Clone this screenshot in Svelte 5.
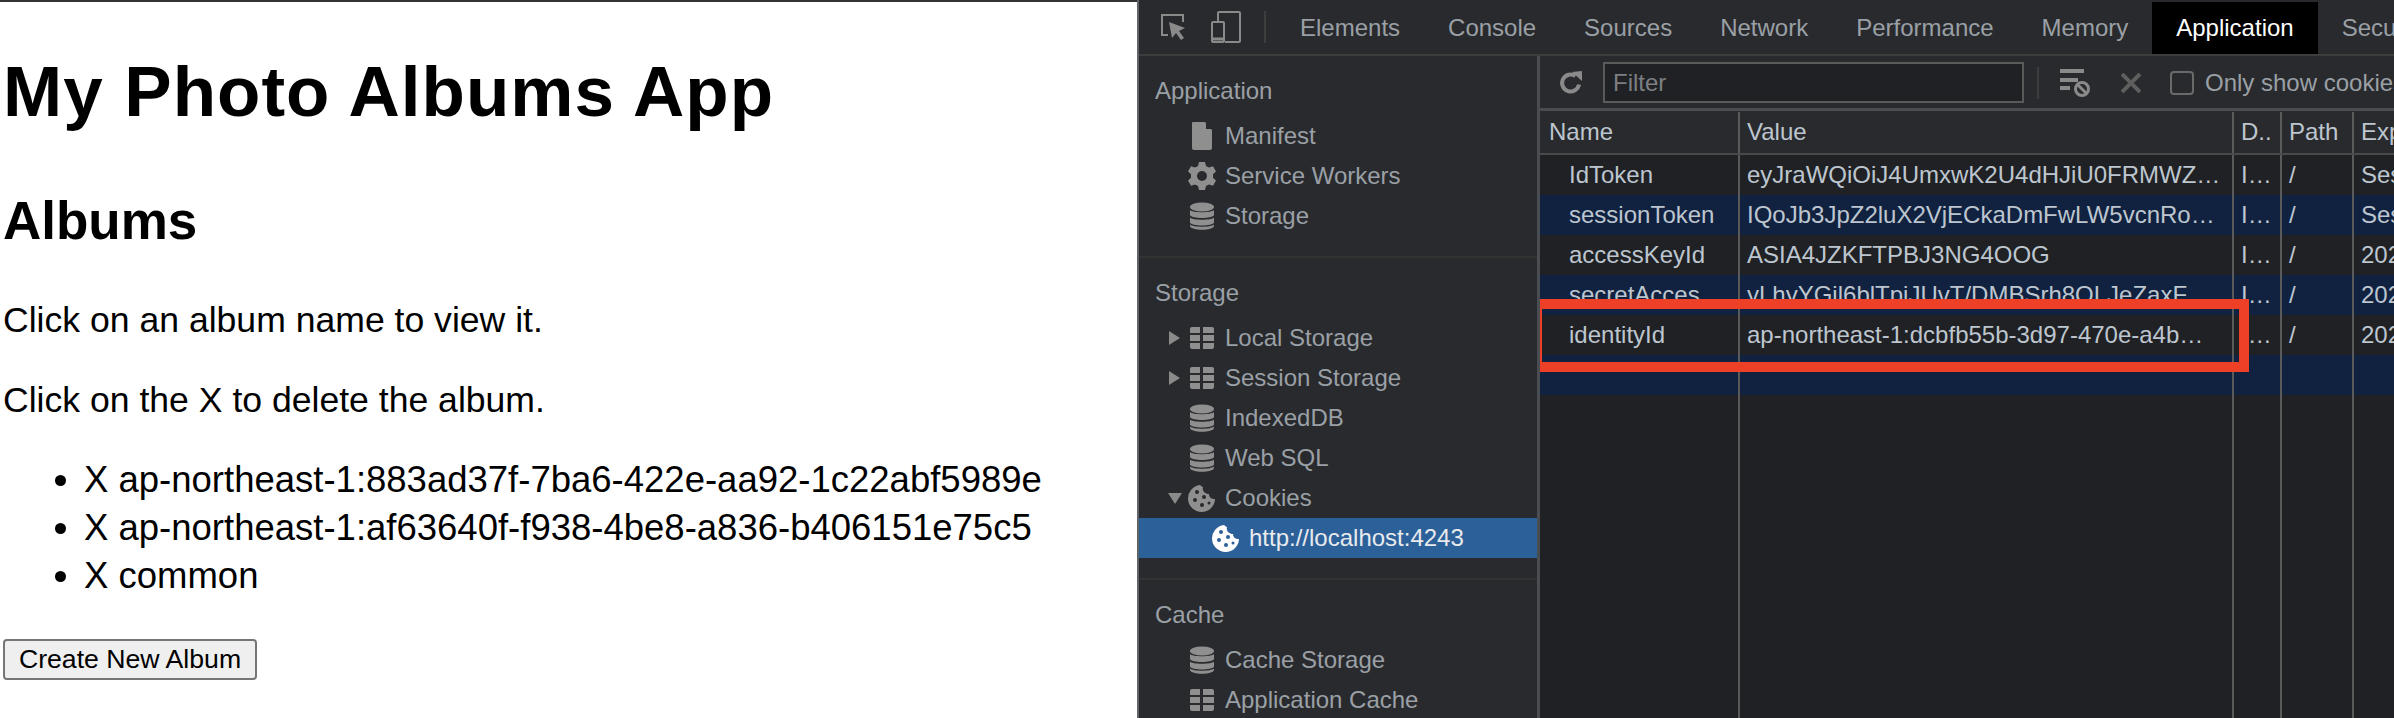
<script>
  const tabs = ["Elements", "Console", "Sources", "Network", "Performance", "Memory", "Application", "Security"]

  const groups = [
    {
      title: "Application",
      items: [
        { label: "Manifest", icon: "doc" },
        { label: "Service Workers", icon: "gear" },
        { label: "Storage", icon: "db" },
      ],
    },
    {
      title: "Storage",
      items: [
        { label: "Local Storage", icon: "grid", arrow: "right" },
        { label: "Session Storage", icon: "grid", arrow: "right" },
        { label: "IndexedDB", icon: "db" },
        { label: "Web SQL", icon: "db" },
        { label: "Cookies", icon: "cookie", arrow: "down" },
        { label: "http://localhost:4243", icon: "cookie", selected: true },
      ],
    },
    {
      title: "Cache",
      items: [
        { label: "Cache Storage", icon: "db" },
        { label: "Application Cache", icon: "grid" },
      ],
    },
  ]

  const rows = [
    ["IdToken", "eyJraWQiOiJ4UmxwK2U4dHJiU0FRMWZ…", "I…", "/", "Session"],
    ["sessionToken", "IQoJb3JpZ2luX2VjECkaDmFwLW5vcnRo…", "I…", "/", "Session"],
    ["accessKeyId", "ASIA4JZKFTPBJ3NG4OOG", "I…", "/", "2021"],
    ["secretAcces", "yLhyYGil6blTpjJUvT/DMBSrh8QLJeZaxF", "I…", "/", "2021"],
    ["identityId", "ap-northeast-1:dcbfb55b-3d97-470e-a4b…", "I…", "/", "2021"],
    ["", "", "", "", ""],
  ]
</script>

{#snippet icon(name)}
  {#if name === "doc"}
    <svg class="icon" viewBox="0 0 28 28"><path d="M5 0h12l7 8v18a2 2 0 0 1-2 2H6a2 2 0 0 1-2-2V1a1 1 0 0 1 1-1z" fill="currentColor" /><path d="M18 0v7h6z" fill="#292a2d" /></svg>
  {:else if name === "gear"}
    <svg class="icon" viewBox="0 0 28 28"><path fill="currentColor" fill-rule="evenodd" d="M11 0h6l1 4 3 1.600 4-1.400 3 5.200-3 2.800v3.600l3 2.800-3 5.200-4-1.400L18 24l-1 4h-6l-1-4-3-1.600-4 1.400-3-5.200 3-2.800v-3.600L0 9.400l3-5.200 4 1.400L10 4zM14 9a5 5 0 1 0 0 10 5 5 0 0 0 0-10z" /></svg>
  {:else if name === "db"}
    <svg class="icon" viewBox="0 0 28 28" fill="currentColor"><ellipse cx="14" cy="5" rx="12" ry="4.500" /><path d="M2 8c2 3 22 3 24 0v5c-1 4-23 4-24 0zM2 15.500c2 3 22 3 24 0v5c-1 4-23 4-24 0zM2 22.500c3 3 21 3 24 0v1.500c-1 5-23 5-24 0z" /></svg>
  {:else if name === "grid"}
    <svg class="icon" viewBox="0 0 28 28" fill="currentColor"><path d="M2 5a2 2 0 0 1 2-2h8v6H2zM15 3h9a2 2 0 0 1 2 2v4H15zM2 11h10v6H2zM15 11h11v6H15zM2 19h10v6H4a2 2 0 0 1-2-2zM15 19h11v4a2 2 0 0 1-2 2h-9z" /></svg>
  {:else if name === "cookie"}
    <svg class="icon" viewBox="0 0 28 28"><path fill="currentColor" d="M12 1a13.500 13.500 0 1 0 15 14c-4 0-6-2-6-5-4 0-7-3-6-7-2-.5-2-1.500-3-2z" /><g class="crumbs"><circle cx="9" cy="8" r="2" /><circle cx="16" cy="13" r="2" /><circle cx="7" cy="16" r="2" /><circle cx="14" cy="21" r="2" /><circle cx="21" cy="19" r="1.500" /></g></svg>
  {/if}
{/snippet}

<div class="screen">
  <main class="page">
    <h1>My Photo Albums App</h1>
    <h2>Albums</h2>
    <p>Click on an album name to view it.</p>
    <p>Click on the X to delete the album.</p>
    <ul>
      <li>X ap-northeast-1:883ad37f-7ba6-422e-aa92-1c22abf5989e</li>
      <li>X ap-northeast-1:af63640f-f938-4be8-a836-b406151e75c5</li>
      <li>X common</li>
    </ul>
    <button>Create New Album</button>
  </main>

  <section class="devtools">
    <header class="tabbar">
      <svg class="tool inspect" viewBox="0 0 26 28" fill="none">
        <path d="M8 22H2V2h21v7" stroke="currentColor" stroke-width="2" />
        <path d="M9 9l16 6-6 3 5 7-3 2-5-7-4 5z" fill="currentColor" />
      </svg>
      <svg class="tool device" viewBox="0 0 30 32" fill="none" stroke="currentColor" stroke-width="2">
        <path d="M7 11V2a1 1 0 0 1 1-1h20a1 1 0 0 1 1 1v28a1 1 0 0 1-1 1H14" />
        <rect x="1" y="11" width="12" height="20" rx="1" />
        <path d="M1 28h12" stroke-width="3" />
      </svg>
      <span class="sep"></span>
      <nav class="tabs">
        {#each tabs as tab}
          <span class="tab" class:active={tab === "Application"}>{tab}</span>
        {/each}
      </nav>
    </header>

    <div class="body">
      <aside class="sidebar">
        {#each groups as group}
          <div class="group">
            <h3>{group.title}</h3>
            {#each group.items as item}
              <div class="item" class:selected={item.selected}>
                <span class="arrow-slot">
                  {#if item.arrow}<i class={`arrow ${item.arrow}`}></i>{/if}
                </span>
                {@render icon(item.icon)}
                <span class="item-label">{item.label}</span>
              </div>
            {/each}
          </div>
        {/each}
      </aside>

      <div class="content">
        <div class="filterbar">
          <svg class="refresh" viewBox="0 0 24 24" fill="none">
            <path d="M20 13.500A8.500 8.500 0 1 1 16.500 5" stroke="currentColor" stroke-width="4" />
            <path d="M13 1l10-1v10z" fill="currentColor" />
          </svg>
          <input class="filter" placeholder="Filter" />
          <span class="sep"></span>
          <svg class="clear" viewBox="0 0 32 30" fill="none" stroke="currentColor">
            <path d="M1 3h24M1 12h18M1 20h10" stroke-width="4" />
            <circle cx="23" cy="21" r="6.500" stroke-width="3" />
            <path d="M19 17l8 8" stroke-width="3" />
          </svg>
          <svg class="close" viewBox="0 0 20 20" stroke="currentColor" stroke-width="4"><path d="M1 1l18 18M19 1L1 19" /></svg>
          <span class="check"></span>
          <span class="only">Only show cookies with an issue</span>
        </div>

        <div class="table">
          <div class="row head">
            <span>Name</span><span>Value</span><span>D..</span><span>Path</span><span>Exp</span>
          </div>
          {#each rows as row}
            <div class="row">
              {#each row as cell}
                <span>{cell}</span>
              {/each}
            </div>
          {/each}
          <div class="row rest"><span></span><span></span><span></span><span></span><span></span></div>
          <div class="highlight"></div>
        </div>
      </div>
    </div>
  </section>
</div>

<style>
  :global(body) {
    margin: 0;
    background: #fff;
  }
  .screen {
    display: flex;
    width: 2394px;
    height: 718px;
    overflow: hidden;
    font-family: "Liberation Sans", Arial, sans-serif;
  }

  .page {
    width: 1137px;
    flex: none;
    box-sizing: border-box;
    border-top: 2px solid #333;
    padding-left: 3px;
    color: #000;
  }
  h1 {
    margin: 53px 0 0;
    font-size: 71px;
    line-height: 74px;
    font-weight: 700;
    letter-spacing: 1px;
  }
  h2 {
    margin: 64px 0 0;
    font-size: 53px;
    line-height: 56px;
    font-weight: 700;
  }
  p {
    margin: 43px 0 0;
    font-size: 35.6px;
    line-height: 37px;
  }
  h2 + p {
    margin-top: 53px;
  }
  ul {
    margin: 37px 0 0;
    padding-left: 81px;
    font-size: 36.5px;
    line-height: 48px;
  }
  button {
    display: block;
    margin-top: 39px;
    height: 41px;
    width: 254px;
    padding: 0;
    box-sizing: border-box;
    font: 26.67px "Liberation Sans", Arial, sans-serif;
    color: #000;
    background: #efefef;
    border: 2px solid #767676;
    border-radius: 4px;
  }

  .devtools {
    flex: 1;
    min-width: 0;
    background: #292a2d;
    border-left: 2px solid #5f6368;
    display: flex;
    flex-direction: column;
    font-size: 24px;
    color: #9aa0a6;
  }

  .tabbar {
    display: flex;
    align-items: center;
    height: 54px;
    flex: none;
    border-bottom: 2px solid #3d3d3d;
    color: #8a8a8a;
    overflow: hidden;
  }
  .tool {
    flex: none;
  }
  .tool.inspect {
    width: 26px;
    height: 28px;
    margin-left: 21px;
  }
  .tool.device {
    width: 30px;
    height: 32px;
    margin-left: 25px;
  }
  .sep {
    width: 2px;
    height: 32px;
    background: #3d3d3d;
    flex: none;
  }
  .tabbar .sep {
    margin-left: 23px;
  }
  .tabs {
    display: flex;
    height: 52px;
    align-self: flex-end;
    margin-left: 10px;
    white-space: nowrap;
  }
  .tab {
    display: flex;
    align-items: center;
    padding: 0 24px;
    color: #9aa0a6;
  }
  .tab.active {
    background: #000;
    color: #fff;
  }

  .body {
    display: flex;
    flex: 1;
    min-height: 0;
  }
  .sidebar {
    width: 398px;
    flex: none;
    border-right: 3px solid #494c50;
  }
  .group {
    padding-bottom: 20px;
    border-bottom: 2px solid #333;
  }
  .group:last-child {
    border-bottom: none;
  }
  .group h3 {
    margin: 0;
    padding: 15px 0 0 16px;
    height: 60px;
    box-sizing: border-box;
    font-size: 24px;
    line-height: 40px;
    font-weight: 400;
    color: #9aa0a6;
  }
  .item {
    display: flex;
    align-items: center;
    height: 40px;
    color: #8f8f8f;
  }
  .arrow-slot {
    width: 49px;
    flex: none;
    display: flex;
    justify-content: flex-end;
    padding-right: 8px;
    box-sizing: border-box;
  }
  .arrow {
    width: 0;
    height: 0;
    border-style: solid;
  }
  .arrow.right {
    border-width: 7px 0 7px 11px;
    border-color: transparent transparent transparent #8a8a8a;
  }
  .arrow.down {
    border-width: 11px 7px 0;
    border-color: #8a8a8a transparent transparent;
    margin-right: -2px;
  }
  .icon {
    width: 28px;
    height: 28px;
    flex: none;
  }
  .crumbs {
    fill: #292a2d;
  }
  .item-label {
    margin-left: 9px;
    color: #9aa0a6;
    white-space: nowrap;
  }
  .item.selected {
    background: #2c6099;
    color: #fff;
    padding-left: 24px;
  }
  .item.selected .item-label {
    color: #e8eaed;
  }
  .item.selected .crumbs {
    fill: #2c6099;
  }

  .content {
    flex: 1;
    min-width: 0;
    display: flex;
    flex-direction: column;
  }
  .filterbar {
    display: flex;
    align-items: center;
    height: 51px;
    padding-top: 1px;
    flex: none;
    border-bottom: 3px solid #494c50;
    color: #8a8a8a;
    white-space: nowrap;
    overflow: hidden;
  }
  .refresh {
    width: 24px;
    height: 24px;
    margin-left: 19px;
    flex: none;
  }
  .filter {
    width: 421px;
    height: 41px;
    flex: none;
    box-sizing: border-box;
    margin-left: 20px;
    padding: 0 8px;
    background: #202124;
    border: 2px solid #5a5a5a;
    outline: none;
    color: #9aa0a6;
    font: 24px "Liberation Sans", Arial, sans-serif;
  }
  .filter::placeholder {
    color: #7d7f82;
    opacity: 1;
  }
  .filterbar .sep {
    margin-left: 13px;
  }
  .clear {
    width: 32px;
    height: 30px;
    margin-left: 20px;
    flex: none;
  }
  .close {
    width: 20px;
    height: 20px;
    margin-left: 30px;
    color: #5f5f5f;
    flex: none;
  }
  .check {
    width: 24px;
    height: 24px;
    margin-left: 29px;
    box-sizing: border-box;
    border: 2px solid #6a6a6a;
    border-radius: 4px;
    flex: none;
  }
  .only {
    margin-left: 11px;
    color: #9aa0a6;
  }

  .table {
    position: relative;
    flex: 1;
    display: flex;
    flex-direction: column;
    background: #202124;
    margin-top: 1px;
    color: #bdc6cf;
    overflow: hidden;
  }
  .row {
    display: grid;
    grid-template-columns: 200px 494px 48px 72px 1fr;
    height: 40px;
    flex: none;
    line-height: 40px;
    overflow: hidden;
  }
  .row span {
    padding-left: 7px;
    border-right: 2px solid #5a5a5a;
    overflow: hidden;
    white-space: nowrap;
    box-sizing: border-box;
  }
  .row span:first-child {
    padding-left: 29px;
  }
  .row span:last-child {
    border-right: none;
  }
  .row.head {
    height: 41px;
    border-bottom: 2px solid #4a4a4a;
  }
  .row.head span:first-child {
    padding-left: 9px;
  }
  .row:nth-child(odd) {
    background: #112241;
  }
  .row.head {
    background: #292a2d;
  }
  .row.rest {
    flex: 1;
    background: #202124;
  }
  .highlight {
    position: absolute;
    left: -8px;
    top: 187px;
    width: 717px;
    height: 73px;
    box-sizing: border-box;
    border: 10px solid #ee4026;
  }
</style>
